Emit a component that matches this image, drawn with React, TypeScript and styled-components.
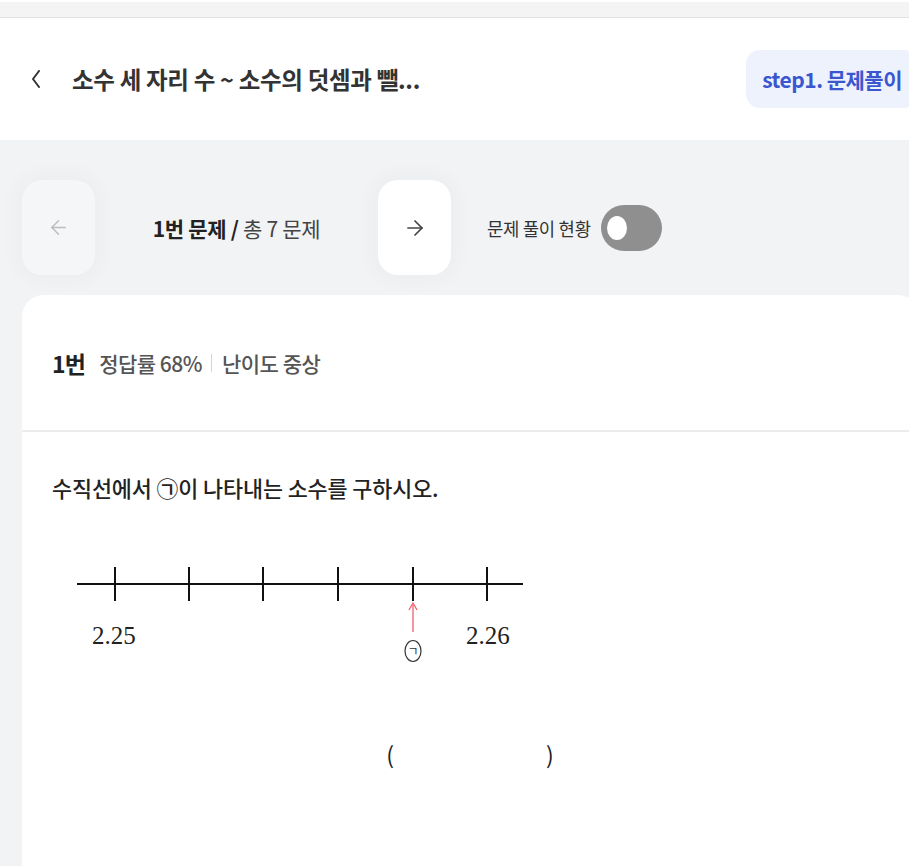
import React from "react";
import styled, { createGlobalStyle } from "styled-components";
import { ArrowLeft, ArrowRight } from "lucide-react";

const GlobalStyle = createGlobalStyle`
  html, body { margin: 0; padding: 0; background: #f2f3f5; overflow: hidden; }
  body { font-family: "Noto Sans CJK KR", "Noto Sans", sans-serif; }
  * { box-sizing: border-box; }
`;

const Page = styled.div`
  width: 940px;
  min-height: 866px;
  display: flex;
  flex-direction: column;
  background: #f2f3f5;
`;

const TopStrip = styled.div`
  height: 18px;
  background: #f4f4f4;
  border-top: 2px solid #ffffff;
  border-bottom: 1px solid #e2e2e2;
`;

const Header = styled.header`
  height: 122px;
  background: #ffffff;
  display: flex;
  align-items: center;
  padding: 0 22px 0 31px;
`;

const BackButton = styled.button`
  border: none;
  background: none;
  padding: 0;
  width: 14px;
  height: 20px;
  display: flex;
  align-items: center;
  cursor: pointer;
`;

const Title = styled.h1`
  margin: 0 0 0 27px;
  flex: 1;
  font-size: 23.5px;
  font-weight: 700;
  color: #333333;
  letter-spacing: -0.3px;
  white-space: nowrap;
`;

const StepBadge = styled.div`
  height: 58px;
  padding: 0 16px;
  border-radius: 14px;
  background: #eef2fd;
  color: #3a57cf;
  font-size: 21px;
  font-weight: 700;
  display: flex;
  align-items: center;
  letter-spacing: -0.5px;
`;

const Body = styled.main`
  flex: 1;
  padding: 40px 20px 0 22px;
  display: flex;
  flex-direction: column;
  gap: 20px;
`;

const NavRow = styled.div`
  display: flex;
  align-items: center;
`;

const NavButton = styled.button<{ $active?: boolean }>`
  width: 73px;
  height: 95px;
  border: none;
  border-radius: 20px;
  background: ${(p) => (p.$active ? "#ffffff" : "#f5f6f8")};
  color: ${(p) => (p.$active ? "#444444" : "#bcbcbc")};
  box-shadow: 0 0 18px 8px rgba(0, 0, 0, 0.025);
  display: flex;
  align-items: center;
  justify-content: center;
  cursor: pointer;
`;

const Counter = styled.div`
  width: 283px;
  text-align: center;
  font-size: 21px;
  color: #444444;
  letter-spacing: -0.3px;
  strong { font-weight: 700; color: #222222; }
`;

const StatusLabel = styled.span`
  margin-left: 36px;
  font-size: 17.8px;
  color: #333333;
  letter-spacing: -0.3px;
`;

const Toggle = styled.div`
  margin-left: 10px;
  width: 61px;
  height: 46px;
  border-radius: 23px;
  background: #8f8f8f;
  display: flex;
  align-items: center;
  padding-left: 6px;
`;

const Knob = styled.span`
  width: 20px;
  height: 24px;
  border-radius: 50%;
  background: #ffffff;
`;

const Card = styled.section`
  flex: 1;
  background: #ffffff;
  border-radius: 22px 22px 0 0;
  display: flex;
  flex-direction: column;
`;

const CardHeader = styled.div`
  height: 137px;
  padding: 0 30px;
  display: flex;
  align-items: center;
  border-bottom: 2px solid #ececec;
`;

const QNumber = styled.span`
  font-size: 23px;
  font-weight: 700;
  color: #222222;
  letter-spacing: -0.8px;
`;

const Meta = styled.span<{ $first?: boolean }>`
  margin-left: ${(p) => (p.$first ? "14px" : "0")};
  font-size: 21px;
  font-weight: 500;
  color: #555555;
  letter-spacing: -0.5px;
`;

const Divider = styled.span`
  width: 1px;
  height: 18px;
  background: #d4d4d4;
  margin: 0 10px 0 9px;
`;

const CardContent = styled.div`
  padding: 40px 30px 0;
  display: flex;
  flex-direction: column;
`;

const Question = styled.p`
  margin: 0;
  font-size: 21.8px;
  font-weight: 500;
  color: #222222;
  letter-spacing: -0.1px;
  line-height: 32px;
`;

const Figure = styled.svg`
  margin-top: 56px;
  display: block;
`;

const Answer = styled.div`
  margin-top: 65px;
  display: flex;
  justify-content: center;
  gap: 152px;
  font-size: 23px;
  color: #222222;
  padding-right: 2px;
`;

const ticks = [63, 137, 211, 286, 361, 435];

export default function App() {
  return (
    <>
      <GlobalStyle />
      <Page>
        <TopStrip />
        <Header>
          <BackButton aria-label="뒤로">
            <svg width="10" height="18" viewBox="0 0 10 18">
              <polyline points="8,1 2,9 8,17" fill="none" stroke="#333" strokeWidth="2" strokeLinecap="round" strokeLinejoin="round" />
            </svg>
          </BackButton>
          <Title>소수 세 자리 수 ~ 소수의 덧셈과 뺄...</Title>
          <StepBadge>step1. 문제풀이</StepBadge>
        </Header>
        <Body>
          <NavRow>
            <NavButton aria-label="이전">
              <ArrowLeft size={23} strokeWidth={1.5} />
            </NavButton>
            <Counter>
              <strong>1번 문제 /</strong> 총 7 문제
            </Counter>
            <NavButton $active aria-label="다음">
              <ArrowRight size={24} strokeWidth={1.7} />
            </NavButton>
            <StatusLabel>문제 풀이 현황</StatusLabel>
            <Toggle>
              <Knob />
            </Toggle>
          </NavRow>
          <Card>
            <CardHeader>
              <QNumber>1번</QNumber>
              <Meta $first>정답률 68%</Meta>
              <Divider />
              <Meta>난이도 중상</Meta>
            </CardHeader>
            <CardContent>
              <Question>수직선에서 ㉠이 나타내는 소수를 구하시오.</Question>
              <Figure width="480" height="112" viewBox="0 0 480 112">
                <line x1="25" y1="24" x2="471" y2="24" stroke="#111" strokeWidth="2" />
                {ticks.map((x) => (
                  <line key={x} x1={x} y1="7" x2={x} y2="41" stroke="#111" strokeWidth="2" />
                ))}
                <line x1="361" y1="45" x2="361" y2="72" stroke="#f0606a" strokeWidth="1.3" />
                <polyline points="357,50 361,43 365,50" fill="none" stroke="#f0606a" strokeWidth="1.3" />
                <text x="40" y="84" fontFamily="Liberation Serif, serif" fontSize="25" fill="#222">2.25</text>
                <text x="414" y="84" fontFamily="Liberation Serif, serif" fontSize="25" fill="#222">2.26</text>
                <ellipse cx="361" cy="91" rx="8" ry="10.5" fill="none" stroke="#333" strokeWidth="1.2" />
                <text x="361" y="96" textAnchor="middle" fontFamily="Noto Sans CJK KR, sans-serif" fontSize="12" fill="#333">ㄱ</text>
              </Figure>
              <Answer>
                <span>(</span>
                <span>)</span>
              </Answer>
            </CardContent>
          </Card>
        </Body>
      </Page>
    </>
  );
}
